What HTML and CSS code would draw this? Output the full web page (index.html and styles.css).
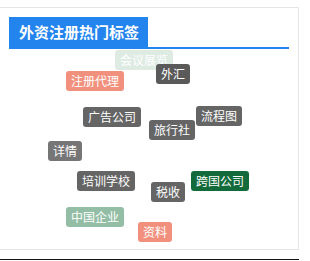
FILE: index.html
```html
<!DOCTYPE html>
<html lang="zh-CN">
<head>
    <meta charset="UTF-8">
    <meta name="viewport" content="width=device-width, initial-scale=1.0">
    <title>外资注册热门标签</title>
    <link rel="stylesheet" href="styles.css">
</head>
<body>
    <div class="panel">
        <div class="panel-head">
            <h2 class="panel-title">外资注册热门标签</h2>
        </div>

        <div class="tag-cloud">
            <a class="tag tag-mint faded" style="left: 115px; top: 1px;">会议展览</a>
            <a class="tag tag-salmon" style="left: 66px; top: 22px;">注册代理</a>
            <a class="tag tag-dark" style="left: 156px; top: 15px;">外汇</a>
            <a class="tag tag-gray" style="left: 83px; top: 58px;">广告公司</a>
            <a class="tag tag-gray" style="left: 149px; top: 71px;">旅行社</a>
            <a class="tag tag-gray" style="left: 196px; top: 57px;">流程图</a>
            <a class="tag tag-light" style="left: 48px; top: 92px;">详情</a>
            <a class="tag tag-gray" style="left: 77px; top: 122px;">培训学校</a>
            <a class="tag tag-gray" style="left: 151px; top: 133px;">税收</a>
            <a class="tag tag-green" style="left: 191px; top: 122px;">跨国公司</a>
            <a class="tag tag-mint" style="left: 66px; top: 158px;">中国企业</a>
            <a class="tag tag-salmon" style="left: 138px; top: 173px;">资料</a>
        </div>
    </div>

    <div class="rule"></div>
</body>
</html>
```

FILE: styles.css
```css
* {
    margin: 0;
    padding: 0;
    box-sizing: border-box;
}

body {
    background: #fff;
    font-family: "Noto Sans CJK SC", "Liberation Sans", sans-serif;
    color: #333;
    overflow: hidden;
}

.panel {
    width: 300px;
    height: 243px;
    margin: 7px 0 0 -1px;
    border: 1px solid #e6e6e6;
    background: #fff;
}

.panel-head {
    margin: 9px 9px 0 9px;
    border-bottom: 2px solid #2384ee;
    display: flex;
}

.panel-title {
    background: #2384ee;
    color: #fff;
    font-size: 15px;
    font-weight: bold;
    line-height: 30px;
    height: 30px;
    padding: 0 10px;
    width: 139px;
    white-space: nowrap;
}

.tag-cloud {
    position: relative;
    height: 190px;
}

.tag {
    position: absolute;
    display: block;
    height: 20px;
    line-height: 20px;
    padding: 0 5px;
    font-size: 12px;
    color: #fff;
    border-radius: 3px;
    white-space: nowrap;
    text-decoration: none;
}

.tag-gray {
    background: #656565;
}

.tag-dark {
    background: #5a5a5a;
}

.tag-light {
    background: #767676;
}

.tag-salmon {
    background: #f1907d;
}

.tag-green {
    background: #136b3b;
}

.tag-mint {
    background: #93bea5;
}

.faded {
    opacity: 0.3;
}

.rule {
    width: 299px;
    height: 1px;
    margin-top: 9px;
    background: #111;
}
```
